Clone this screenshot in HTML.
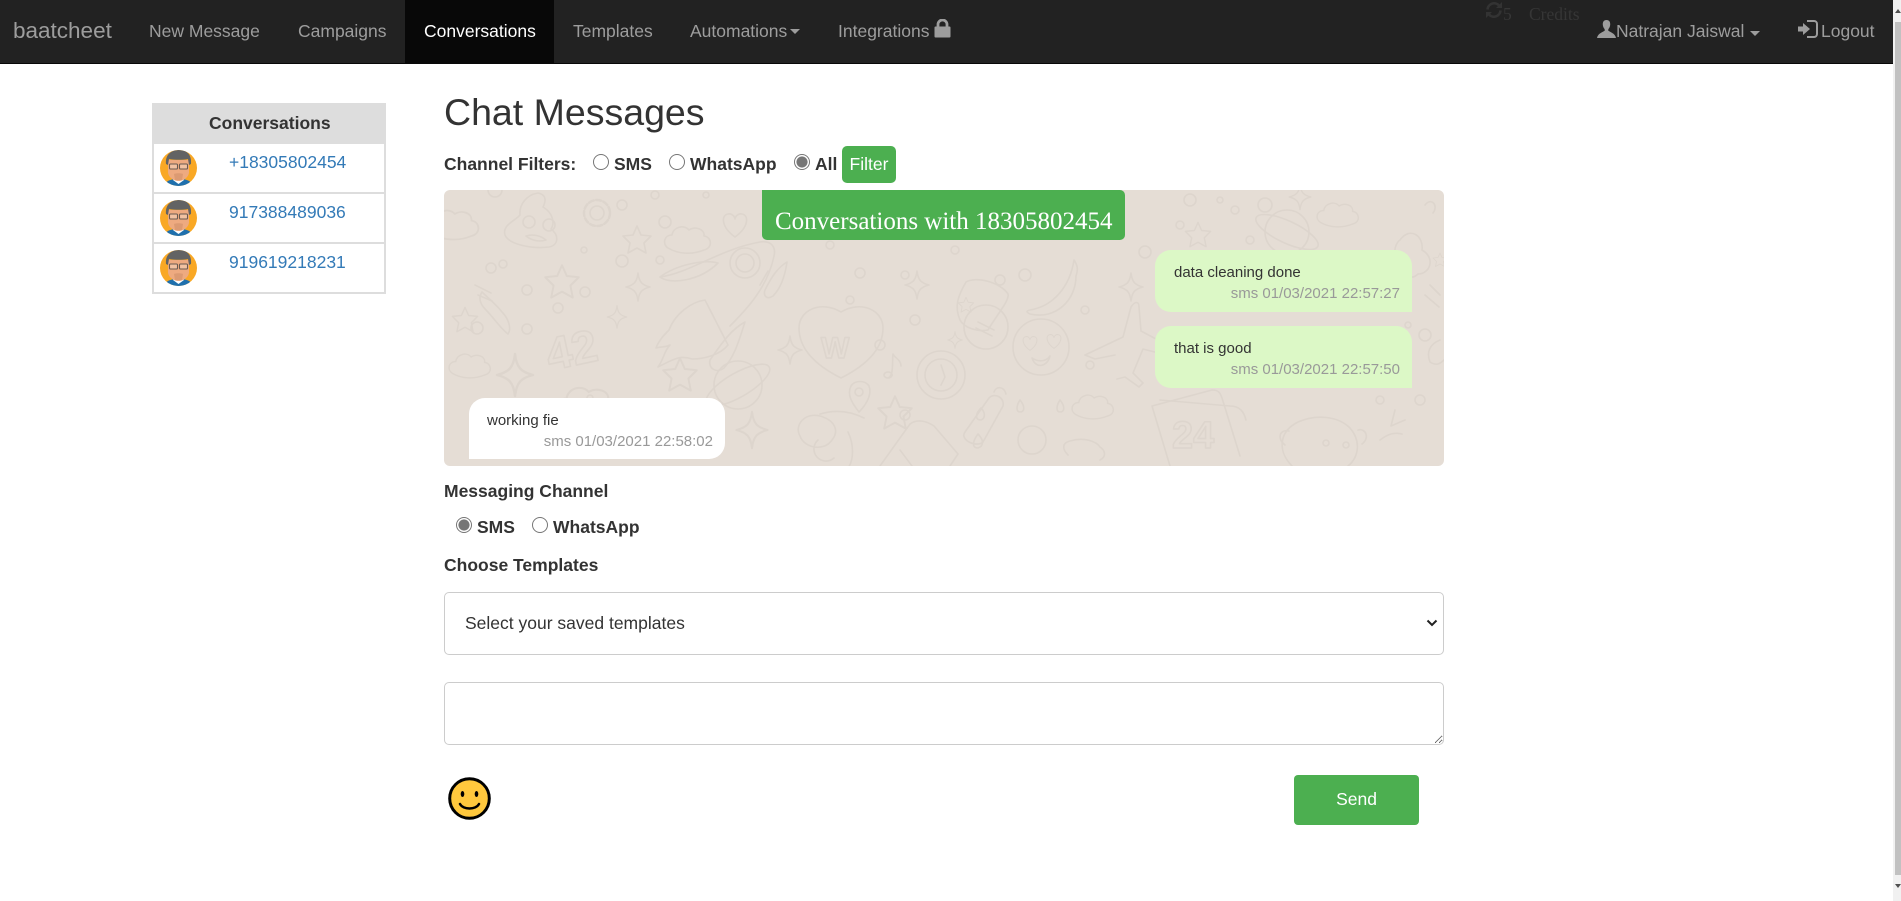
<!DOCTYPE html>
<html lang="en">
<head>
<meta charset="utf-8">
<title>Chat Messages</title>
<style>
html,body{margin:0;padding:0;width:1901px;height:901px;overflow:hidden;background:#fff;font-family:"Liberation Sans",Arial,sans-serif;color:#333}
*{box-sizing:border-box}
.t{position:absolute;white-space:nowrap;line-height:0;height:0;text-decoration:none}
.b{font-weight:700;font-size:17.5px;color:#333}
.nav{position:absolute;left:0;top:0;width:1893px;height:64px;background:#222;border-bottom:1px solid #080808}
.n{font-size:17.5px;color:#9d9d9d}
.active{position:absolute;left:405px;top:0;width:149px;height:63px;background:#080808}
.caret{position:absolute;width:0;height:0;border-left:5px solid transparent;border-right:5px solid transparent;border-top:5px solid #9d9d9d}
.side{position:absolute;left:152px;top:103px;width:234px;height:191px;background:#ddd}
.row{position:absolute;left:154px;width:230px;height:48px;background:#fff}
.av{position:absolute;left:160px;width:37px;height:36px}
.num{font-size:17.5px;color:#337ab7}
input[type=radio]{appearance:none;-webkit-appearance:none;position:absolute;margin:0;width:16px;height:16px;border:1px solid #767676;border-radius:50%;background:#fff}
input[type=radio]:checked{border-color:#767676;background:radial-gradient(circle,#767676 0,#767676 5.2px,#fff 5.9px)}
.chat{position:absolute;left:444px;top:190px;width:1000px;height:276px;border-radius:6px;background:#e5ddd5;overflow:hidden}
.head{position:absolute;left:762px;top:190px;width:363px;height:50px;background:#4caf50;border-radius:0 5px 5px 5px}
.msg{position:absolute;height:62px}
.out{left:1155px;width:257px;background:#dcf8c6;border-radius:16px 16px 0 16px}
.in{left:469px;width:256px;height:61px;background:#fff;border-radius:16px 16px 16px 0}
.m{font-size:15px;color:#333}
.s{font-size:15px;color:#999;text-align:right}
select,textarea{position:absolute;left:444px;width:1000px;border:1px solid #ccc;border-radius:5px;background:#fff;color:#333;font:17.5px "Liberation Sans",Arial,sans-serif;margin:0;outline:0}
select{top:592px;height:63px;padding:0 0 2px 20px;appearance:none;-webkit-appearance:none}
textarea{top:682px;height:63px}
.btn{position:absolute;border:0;background:#4caf50;color:#fff;font:17.5px "Liberation Sans",Arial,sans-serif;padding:0;margin:0;text-align:center}
.sb{position:absolute;left:1893px;top:0;width:8px;height:901px;background:#f1f1f1}
.sb i{position:absolute;left:2px;top:22px;width:6px;height:853px;background:#c1c1c1}
svg{position:absolute;display:block}
</style>
</head>
<body>
<div class="nav"></div>
<div class="active"></div>
<a class="t" style="left:13px;top:31px;font-size:22.5px;color:#9d9d9d">baatcheet</a>
<a class="t n" style="left:149px;top:30.5px">New Message</a>
<a class="t n" style="left:298px;top:30.5px">Campaigns</a>
<a class="t n" style="left:424px;top:30.5px;color:#fff">Conversations</a>
<a class="t n" style="left:573px;top:30.5px">Templates</a>
<a class="t n" style="left:690px;top:30.5px">Automations</a>
<span class="caret" style="left:790px;top:29px"></span>
<a class="t n" style="left:838px;top:30.5px">Integrations</a>
<svg style="left:934px;top:19px" width="17" height="19" viewBox="0 0 17 19"><path d="M4 8V5.5a4.5 4.500 0 0 1 9 0V8" fill="none" stroke="#9d9d9d" stroke-width="2.800"/><rect x=".5" y="7.5" width="16" height="11" rx="1" fill="#9d9d9d"/></svg>

<svg style="left:1485px;top:1px" width="18" height="18" viewBox="0 0 18 18" fill="none" stroke="#333" stroke-width="2.6"><path d="M2.5 8.5A6.6 6.6 0 0 1 14 4.5"/><path d="M15.5 9.5A6.6 6.6 0 0 1 4 13.5"/><path d="M17 1v6h-6z" fill="#333" stroke="none"/><path d="M1 17v-6h6z" fill="#333" stroke="none"/></svg>
<span class="t" style="left:1503px;top:14px;font:17.5px/0 'Liberation Serif',serif;color:#363636">5</span>
<span class="t" style="left:1529px;top:14px;font:17.5px/0 'Liberation Serif',serif;color:#363636">Credits</span>
<svg style="left:1597px;top:20px" width="19" height="18" viewBox="0 0 19 18"><path d="M9.5 0C6.6 0 5.6 2.2 5.8 4.8c.1 1.800.9 3.400 1.900 4.400v1.600C5.500 12.300.9 13.400 0 18h19c-.9-4.600-5.500-5.700-7.700-7.200V9.200c1-1 1.800-2.600 1.900-4.400C13.400 2.200 12.400 0 9.500 0z" fill="#9d9d9d"/></svg>
<a class="t n" style="left:1616px;top:30.5px">Natrajan Jaiswal</a>
<span class="caret" style="left:1750px;top:31px"></span>
<svg style="left:1798px;top:20px" width="20" height="18" viewBox="0 0 20 18"><path d="M9 1h7a3 3 0 0 1 3 3v10a3 3 0 0 1-3 3H9" fill="none" stroke="#9d9d9d" stroke-width="2"/><path d="M0 6.500h5V3l7 6-7 6v-3.500H0z" fill="#9d9d9d"/></svg>
<a class="t n" style="left:1821px;top:30.5px">Logout</a>

<div class="side"></div>
<span class="t b" style="left:209px;top:123px">Conversations</span>
<div class="row" style="top:144px"></div>
<div class="row" style="top:194px"></div>
<div class="row" style="top:244px"></div>
<svg width="0" height="0" style="left:0;top:0"><defs>
<g id="face">
<clipPath id="c"><ellipse cx="18.500" cy="18" rx="18.500" ry="18"/></clipPath>
<g clip-path="url(#c)">
<rect width="37" height="36" fill="#f9a825"/>
<path d="M4 36c2-6 8-7 14.500-7S31 30 33 36z" fill="#1f70ad"/>
<path d="M13 30l5.500 4 5.500-4-2-3h-7z" fill="#fff"/>
<path d="M8 10h21v12c0 5-5.500 9-10.500 9S8 27 8 22z" fill="#eeaa80"/>
<path d="M14 24c1.500-1 7.500-1 9 0l-1 6h-7z" fill="#dc9a72"/>
<path d="M6 14C5 4 12 0 19 0s13 4 12 14l-2 1-1-6c-5 1-13 1-19 0l-1 6z" fill="#636363"/>
<g fill="#f5d9c4" fill-opacity=".5" stroke="#6a5a50" stroke-width="1.100"><rect x="9.500" y="14" width="8" height="5" rx="1"/><rect x="19.500" y="14" width="8" height="5" rx="1"/></g>
</g></g>
</defs></svg>
<svg class="av" style="top:150px" viewBox="0 0 37 36"><use href="#face"/></svg>
<svg class="av" style="top:200px" viewBox="0 0 37 36"><use href="#face"/></svg>
<svg class="av" style="top:250px" viewBox="0 0 37 36"><use href="#face"/></svg>
<a class="t num" style="left:229px;top:161.5px">+18305802454</a>
<a class="t num" style="left:229px;top:212px">917388489036</a>
<a class="t num" style="left:229px;top:262px">919619218231</a>

<span class="t" style="left:444px;top:112px;font-size:37.5px;color:#333">Chat Messages</span>

<span class="t b" style="left:444px;top:164px">Channel Filters:</span>
<input type="radio" name="f" style="left:593px;top:154px">
<span class="t b" style="left:614px;top:164px">SMS</span>
<input type="radio" name="f" style="left:669px;top:154px">
<span class="t b" style="left:690px;top:164px">WhatsApp</span>
<input type="radio" name="f" checked style="left:794px;top:154px">
<span class="t b" style="left:815px;top:164px">All</span>
<button class="btn" style="left:842px;top:146px;width:54px;height:37px;border-radius:5px">Filter</button>

<div class="chat">
<svg width="1000" height="276" viewBox="444 190 1000 276" style="left:0;top:0">
<defs>
<path id="st" d="M0-14L4-5 14-4 7 3 9 13 0 8-9 13-7 3-14-4-4-5z"/>
<path id="sp" d="M0-14C1-5 4-2 12 0 4 2 1 5 0 14-1 5-4 2-12 0-4-2-1-5 0-14z"/>
<path id="cl" d="M-22 8c-6-4-4-13 4-13 1-8 12-11 17-5 6-4 16-1 15 6 8 1 9 12 0 14-12 5-26 4-36-2z"/>
<path id="he" d="M0 14C-14 4-14-8-7-9-3-10 0-6 0-4 0-6 3-10 7-9 14-8 14 4 0 14z"/>
</defs>
<g fill="none" stroke="#ddd5cd" stroke-width="1.600" stroke-linecap="round" stroke-linejoin="round">
<use href="#cl" transform="translate(456 225) scale(1.100)"/>
<path d="M505 235c-3-10 10-14 15-20-1-10 6-20 18-22 10 2 7 10 5 14 10 6 12 16 8 22 8 6 8 16-2 18-16 2-40-2-44-12z"/>
<circle cx="529" cy="222" r="6"/><circle cx="549" cy="225" r="6"/><path d="M526 236c6 5 14 6 20 4-6-5-14-6-20-4z"/>
<circle cx="597" cy="213" r="7"/><circle cx="597" cy="213" r="13" stroke-dasharray="5 2.500" stroke-width="2.500"/>
<use href="#st" x="637" y="240"/><use href="#cl" transform="translate(690 240)"/><use href="#he" x="735" y="223"/>
<circle cx="665" cy="222" r="6"/><circle cx="622" cy="205" r="5"/><circle cx="503" cy="264" r="4"/><circle cx="491" cy="268" r="5"/><circle cx="585" cy="292" r="5"/><circle cx="622" cy="261" r="6"/><circle cx="527" cy="290" r="5"/><circle cx="558" cy="308" r="5"/><circle cx="477" cy="328" r="6"/><circle cx="527" cy="329" r="5"/><circle cx="660" cy="260" r="4"/><circle cx="584" cy="250" r="3"/><circle cx="495" cy="190" r="7"/><circle cx="655" cy="195" r="4"/><circle cx="706" cy="195" r="3"/><circle cx="590" cy="398" r="3"/>
<path d="M660 277c30-4 60-28 100-35 12-2 16 6 14 14-6 30-26 52-44 70"/><circle cx="745" cy="263" r="15"/><circle cx="745" cy="263" r="9"/>
<path d="M660 277c10 8 40 4 58-14-14-4-42 2-58 14zM705 300c-14 2-30 14-36 30-4 4-10 10-13 18 6-2 8 0 14-3-6 6-6 14-12 22 16-8 22-12 34-8 12 0 28-4 36-14zM710 360c10-14 20-30 35-38-6 18-10 34-21 46-8 6-16 0-14-8z"/>
<path d="M482 292c-4 6-2 12 4 18 8 8 14 18 22 24 4-6 0-16-6-22-6-8-14-14-20-20z"/><path d="M475 285l16 8M478 295l14 6"/>
<use href="#st" transform="translate(562 282) scale(1.200)"/><use href="#sp" x="638" y="287"/><use href="#sp" transform="translate(617 317) scale(.8)"/><use href="#sp" x="790" y="350"/>
<text x="545" y="366" font-family="Liberation Sans" font-weight="700" font-size="46" transform="rotate(-12 570 345)">42</text>
<use href="#cl" transform="translate(472 366) scale(.9)"/><use href="#cl" transform="translate(590 405) scale(1.300)"/><use href="#sp" transform="translate(515 375) scale(1.500)"/><use href="#st" transform="translate(680 375) scale(1.200)"/>
<circle cx="738" cy="385" r="24"/><ellipse cx="738" cy="385" rx="36" ry="12" transform="rotate(-30 738 385)"/>
<use href="#st" transform="translate(465 320) scale(.9)"/><use href="#sp" transform="translate(490 420)"/>
<path d="M765 290c6-12 12-22 22-28-2 14-6 26-14 34-6 4-10 0-8-6zM760 285l8-14"/>
<path d="M841 378c-24-12-42-28-42-50 0-18 22-28 42-16 20-12 42-2 42 16 0 22-18 38-42 50z"/>
<text x="821" y="358" font-family="Liberation Sans" font-weight="700" font-size="30">W</text>
<path d="M888 378c6-2 4-16 5-24 2 4 8 6 8 12M888 372a4 3 0 1 0 .100 0"/>
<circle cx="941" cy="375" r="24"/><circle cx="941" cy="375" r="16"/><path d="M941 365l4 12-4 8"/>
<path d="M859 412c-8-10-12-18-8-26 4-6 14-6 18 0 3 8-2 18-10 26z"/><circle cx="859" cy="392" r="4"/>
<path d="M965 432l24-34c6-6 16 0 14 8l-20 36c-6 6-24-2-18-10z"/><path d="M994 392c2-6 10-6 12 2"/><path d="M981 408c-6 6-6 12 0 12 5-2 4-8 0-12z"/>
<use href="#st" transform="translate(895 413) scale(1.200)"/>
<path d="M800 436c-6-10 4-24 20-20 14 4 20 14 12 24-8 12-28 8-32-4zM820 414c20-6 36 0 44 4M848 432c6 12 6 28 0 36M818 440a12 12 0 1 0 16 18"/>
<use href="#sp" transform="translate(752 430) scale(1.300)"/>
<path d="M880 466l30-42c8-6 18-2 24 2l24 28-8 12M900 450l12 16"/>
<path d="M978 434c-6 8-6 14 0 14 6-2 6-8 0-14z"/>
<circle cx="850" cy="300" r="4"/><circle cx="830" cy="245" r="4"/><circle cx="860" cy="273" r="5"/><circle cx="905" cy="415" r="5"/><circle cx="880" cy="345" r="5"/><circle cx="915" cy="320" r="5"/><circle cx="955" cy="250" r="4"/><circle cx="1000" cy="280" r="5"/><circle cx="1025" cy="275" r="6"/><circle cx="905" cy="275" r="4"/><circle cx="1085" cy="310" r="4"/><circle cx="1090" cy="365" r="4"/>
<path d="M960 320c-6-14-2-24 6-38 10-6 34 0 42 12 2 6-12 22-20 36-10 2-24-2-28-10z"/><use href="#st" transform="translate(966 305) scale(.55)"/><use href="#sp" transform="translate(955 340) scale(.6)"/>
<circle cx="986" cy="327" r="22"/><path d="M978 322l16 8M976 328l16 8"/>
<circle cx="1041" cy="347" r="28"/><use href="#he" transform="translate(1030 342) scale(.6)"/><use href="#he" transform="translate(1054 340) scale(.6)"/><path d="M1032 358c6 4 14 4 18-2-2 10-14 14-18 2z"/>
<path d="M1030 310c24-4 40-24 44-50 4 6 4 10 2 16 0 24-20 44-46 38-4-2-4-3 0-4z"/><use href="#sp" transform="translate(1131 287)"/><use href="#sp" transform="translate(917 285)"/>
<path d="M1085 355l38-18 8-30c4-6 8-6 8 0l2 24 30 16-4 8-24-6-10 24 10 10-4 4-14-10-8 2M1085 355l10 4 20-4"/>
<use href="#cl" transform="translate(1095 407) scale(.9)"/>
<path d="M1068 455c-6-6-6-12 2-14 14-4 26 0 30 6 6 4 6 10 0 13"/><path d="M1020 400c-4 6-4 12 0 12 5 0 5-6 0-12z"/><path d="M1060 400c-4 6-4 12 0 12 5 0 5-6 0-12z"/><circle cx="1032" cy="440" r="14"/>
<path d="M1170 466l-18-60 60-16c6 0 8 2 10 8l18 58"/>
<text x="1172" y="448" font-family="Liberation Sans" font-weight="700" font-size="38">24</text>
<path d="M1292 466c-14-14-14-34 6-44 18-8 40-6 52 6 12 14 8 30-2 38"/><circle cx="1326" cy="443" r="3"/><circle cx="1346" cy="445" r="3"/><path d="M1285 445c-8-6-6-16 4-14M1358 430c8-2 12 8 4 14"/>
<circle cx="1287" cy="232" r="22"/><ellipse cx="1287" cy="232" rx="34" ry="11" transform="rotate(25 1287 232)"/>
<use href="#cl" transform="translate(1340 215) scale(.9)"/><use href="#st" transform="translate(1198 235) scale(.9)"/><use href="#sp" transform="translate(1300 197) scale(.9)"/>
<path d="M1400 240c10-14 24-4 22 10 14 8 8 24-4 24-8 8-20 0-18-10-8-6-6-20 0-24z"/>
<path d="M1440 340c-10 4-14 12-10 22 6 4 10 2 14-2"/><path d="M1430 285l10 10M1425 295l14 12"/>
<circle cx="1265" cy="205" r="7"/><circle cx="1235" cy="210" r="4"/><circle cx="1220" cy="200" r="3"/><circle cx="1180" cy="225" r="4"/><circle cx="1145" cy="252" r="6"/><circle cx="1190" cy="200" r="6"/><circle cx="1250" cy="240" r="4"/><circle cx="1425" cy="335" r="6"/><circle cx="1408" cy="325" r="3"/><circle cx="1420" cy="400" r="5"/><circle cx="1380" cy="400" r="4"/>
<path d="M1425 205c6-8 14 0 8 8"/><path d="M1395 410l-4 16 14-6M1380 440c8-6 14-8 22-6"/>
<path d="M1160 400l70 6c10 0 14 6 16 14"/>
<use href="#st" transform="translate(1440 260) scale(.5)"/>
</g>
</svg>
</div>
<div class="head"></div>
<span class="t" style="left:775px;top:221.5px;font:25px/0 'Liberation Serif',serif;color:#fff">Conversations with 18305802454</span>

<div class="msg out" style="top:250px"></div>
<span class="t m" style="left:1174px;top:273px">data cleaning done</span>
<span class="t s" style="right:501px;top:294px">sms 01/03/2021 22:57:27</span>
<div class="msg out" style="top:326px"></div>
<span class="t m" style="left:1174px;top:349px">that is good</span>
<span class="t s" style="right:501px;top:370px">sms 01/03/2021 22:57:50</span>
<div class="msg in" style="top:398px"></div>
<span class="t m" style="left:487px;top:421px">working fie</span>
<span class="t s" style="right:1188px;top:442px">sms 01/03/2021 22:58:02</span>

<span class="t b" style="left:444px;top:491px">Messaging Channel</span>
<input type="radio" name="c" checked style="left:456px;top:517px">
<span class="t b" style="left:477px;top:527px">SMS</span>
<input type="radio" name="c" style="left:532px;top:517px">
<span class="t b" style="left:553px;top:527px">WhatsApp</span>
<span class="t b" style="left:444px;top:565px">Choose Templates</span>

<select><option>Select your saved templates</option></select>
<svg style="left:1426px;top:619px" width="12" height="8" viewBox="0 0 12 8"><path d="M1.500 1.500L6 6l4.500-4.500" fill="none" stroke="#222" stroke-width="2"/></svg>
<textarea></textarea>

<svg style="left:448px;top:777px" width="43" height="43" viewBox="0 0 43 43"><circle cx="21.500" cy="21.500" r="19.800" fill="#ffc83d" stroke="#000" stroke-width="3"/><ellipse cx="14.500" cy="17" rx="1.800" ry="3" fill="#000"/><ellipse cx="28.500" cy="17" rx="1.800" ry="3" fill="#000"/><path d="M12 27c3 6 16 6 19 0" fill="none" stroke="#000" stroke-width="2.500" stroke-linecap="round"/></svg>
<button class="btn" style="left:1294px;top:775px;width:125px;height:50px;border-radius:4px;padding-bottom:2px">Send</button>

<div class="sb"><i></i></div>
<svg style="left:1895px;top:9px" width="6" height="5" viewBox="0 0 6 5"><path d="M3 0l3 4H0z" fill="#505050"/></svg>
<svg style="left:1895px;top:884px" width="6" height="5" viewBox="0 0 6 5"><path d="M3 4L0 0h6z" fill="#505050"/></svg>
</body>
</html>
